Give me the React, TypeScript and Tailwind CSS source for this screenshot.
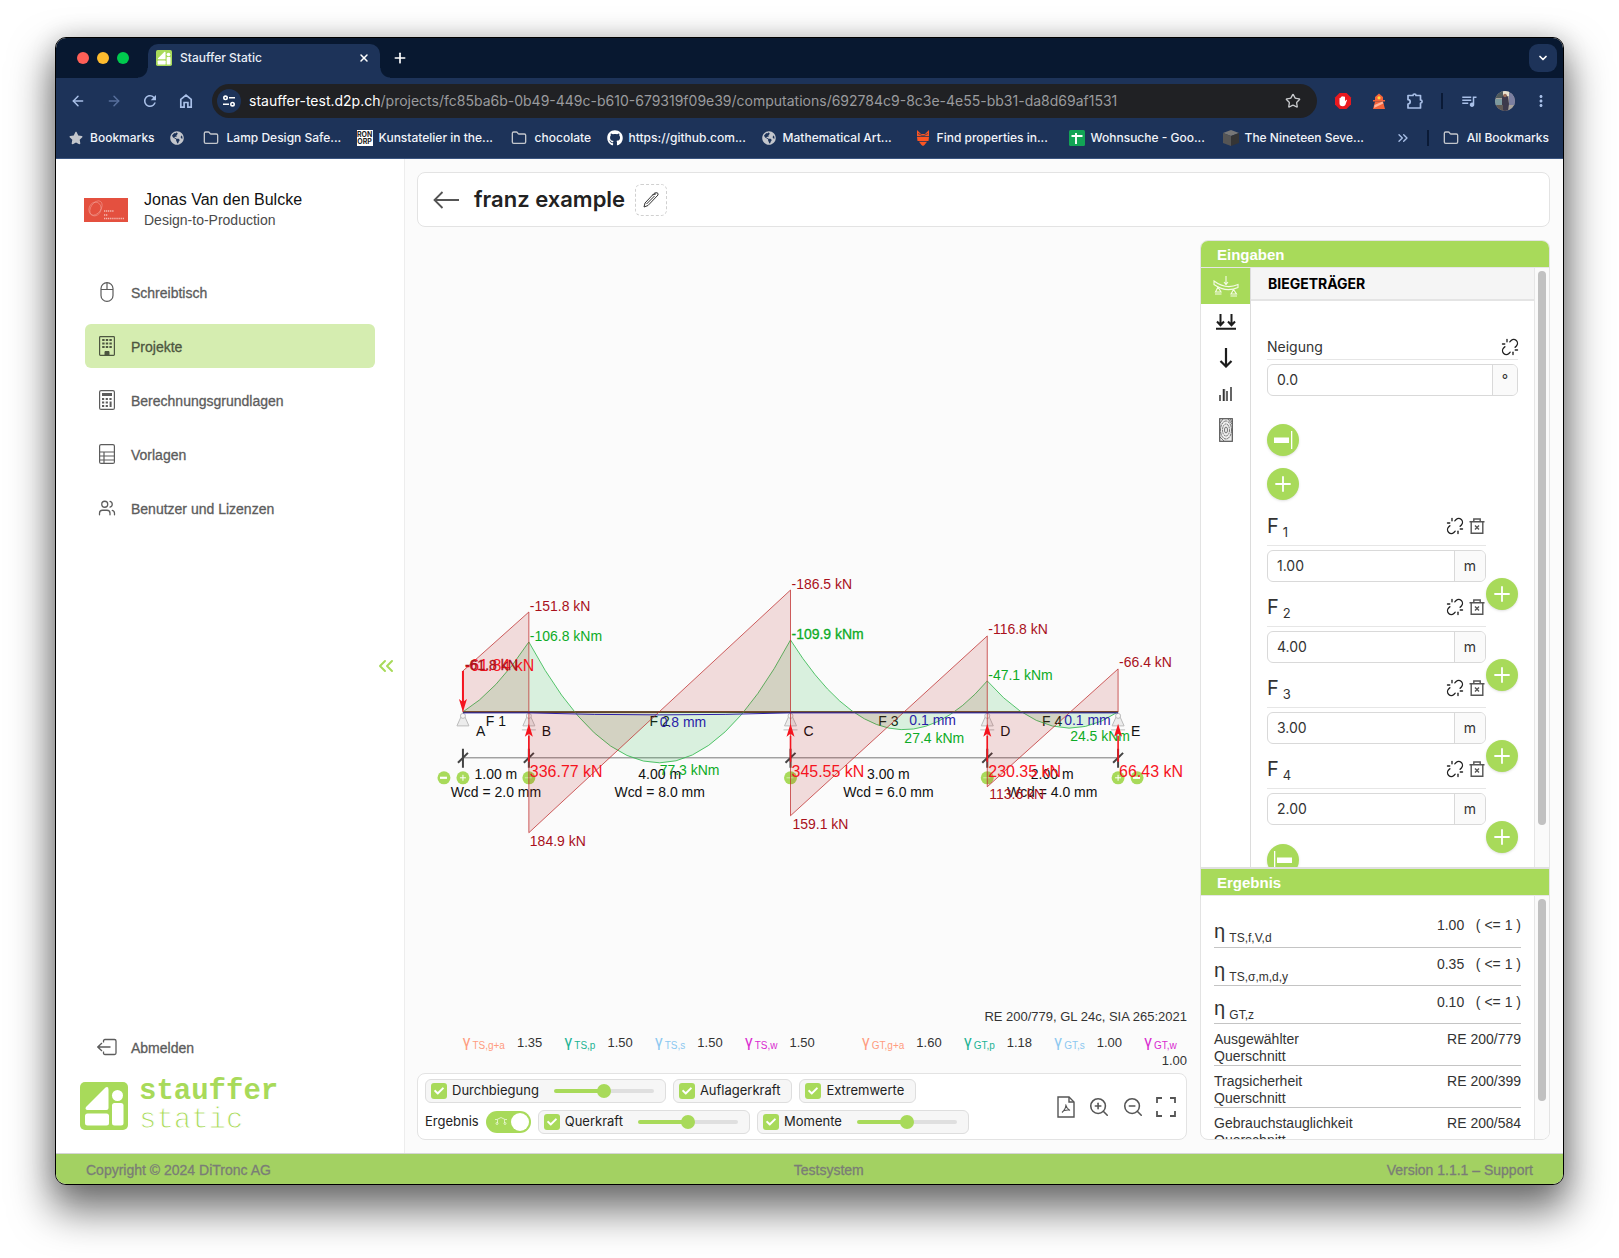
import React from "react";
import {
  ArrowLeft,
  ArrowRight,
  ChevronDown,
  ChevronsLeft,
  ChevronsRight,
  Folder,
  Plus,
  Star,
  Unlink,
  Users,
  X,
  ZoomIn,
  ZoomOut,
} from "lucide-react";
import { FaGithub, FaGlobeAmericas, FaStar, FaCheck } from "react-icons/fa";
import { MdMoreVert, MdQueueMusic, MdRefresh } from "react-icons/md";

function LogoMark({ className }: { className: string }) {
  return (
    <svg viewBox="0 0 48 48" className={className} aria-hidden="true">
      <rect width="48" height="48" rx="5" fill="#a8da5a" />
      <path d="M6 25 L25.500 5.500 Q28.500 4 28.500 7.500 V26 Q28.500 28 26.500 28 H7.500 Q4.500 27.500 6 25Z" fill="#fff" />
      <rect x="5" y="31.500" width="24" height="12" rx="2.500" fill="#fff" />
      <circle cx="37.500" cy="13.500" r="5.500" fill="#fff" />
      <rect x="32" y="21" width="11.500" height="22.500" rx="2.500" fill="#fff" />
    </svg>
  );
}

/* ---------- browser chrome ---------- */

function TabStrip() {
  return (
    <div className="flex h-10 items-end bg-[#081830] pr-1.5">
      <div className="flex h-10 w-23 items-center gap-2 pl-[21px]">
        <span className="size-3 rounded-full bg-[#ff5f57]" />
        <span className="size-3 rounded-full bg-[#febc2e]" />
        <span className="size-3 rounded-full bg-[#00ca4e]" />
      </div>
      <div className="relative flex h-[34px] w-[232px] items-center rounded-t-[10px] bg-[#1d3359] px-2 pb-1.5">
        <span className="absolute bottom-0 -left-2.5 size-2.5 bg-[radial-gradient(circle_at_0_0,transparent_9px,#1d3359_10px)]" />
        <span className="absolute -right-2.5 bottom-0 size-2.5 bg-[radial-gradient(circle_at_100%_0,transparent_9px,#1d3359_10px)]" />
        <LogoMark className="size-4" />
        <span className="ml-2 flex-1 text-xs font-medium text-[#e8edf6]">Stauffer Static</span>
        <button type="button" aria-label="Close tab" className="mr-0.5 text-white">
          <X className="size-3" strokeWidth={3} />
        </button>
      </div>
      <button type="button" aria-label="New tab" className="mb-3 ml-3 text-white">
        <Plus className="size-4" strokeWidth={2.500} />
      </button>
      <button type="button" aria-label="Search tabs" className="mb-1.5 ml-auto grid size-7 place-items-center rounded-[9px] bg-[#1d3359] text-white">
        <ChevronDown className="size-3" strokeWidth={3.500} />
      </button>
    </div>
  );
}

function HomeIcon() {
  return (
    <svg viewBox="0 0 16 16" className="size-4" fill="none" stroke="currentColor" strokeWidth="1.700" aria-hidden="true">
      <path d="M2.800 6.300 8 2.200 13.200 6.300 V14.200 H9.900 V9.500 H6.100 V14.200 H2.800Z" />
    </svg>
  );
}

function PuzzleIcon() {
  return (
    <svg viewBox="0 0 18 18" className="size-[18px]" fill="none" stroke="currentColor" strokeWidth="1.700" strokeLinejoin="round" aria-hidden="true">
      <path d="M2 3.500 H7 A1.500 1.500 0 0 1 10 3.500 H14.500 V8 A1.600 1.600 0 0 1 14.500 11.200 V16 H2 V12 A2.200 2.200 0 0 0 2 7.600Z" />
    </svg>
  );
}

function Toolbar() {
  return (
    <div className="flex h-10 items-end bg-[#1d3359] pl-[13px] text-[#a9c0e8]">
      <div className="flex h-[34px] items-center gap-[18px]">
        <button type="button" aria-label="Back"><ArrowLeft className="size-[18px] p-px" strokeWidth={2.200} /></button>
        <button type="button" aria-label="Forward" className="text-[#576f9c]"><ArrowRight className="size-[18px] p-px" strokeWidth={2.200} /></button>
        <button type="button" aria-label="Reload"><MdRefresh className="size-[18px]" /></button>
        <button type="button" aria-label="Home" className="px-px"><HomeIcon /></button>
      </div>
      <div className="ml-[17px] flex h-[34px] min-w-0 flex-1 items-center rounded-full bg-[#202124] pr-4 pl-[5px]">
        <button type="button" aria-label="Site information" className="grid size-6 shrink-0 place-items-center rounded-full bg-[#1d3359] text-white">
          <svg viewBox="0 0 14 14" className="size-3.5" fill="none" stroke="currentColor" strokeWidth="1.600" aria-hidden="true">
            <circle cx="3.500" cy="3.800" r="1.700" /><path d="M7 3.800H13M1 10.200H7" /><circle cx="10.500" cy="10.200" r="1.700" />
          </svg>
        </button>
        <div role="textbox" aria-label="Address" className="ml-2 min-w-0 flex-1 truncate text-sm text-[#9a9b9e]">
          <span className="text-white">stauffer-test.d2p.ch</span>/projects/fc85ba6b-0b49-449c-b610-679319f09e39/computations/692784c9-8c3e-4e55-bb31-da8d69af1531
        </div>
        <button type="button" aria-label="Bookmark this page" className="text-[#c7c9cc]"><Star className="size-4" /></button>
      </div>
      <div className="flex h-[34px] items-center gap-[18px] pr-[13px] pl-[17px]">
        <svg viewBox="0 0 18 18" className="size-[18px]" aria-hidden="true">
          <path d="M5.500 1h7L17 5.500v7L12.500 17h-7L1 12.500v-7Z" fill="#e8191f" />
          <path d="M5.500 9.500V6.200q.7-.8 1.300 0V5q.7-.9 1.400 0v-.6q.8-.9 1.400 0V5q.8-.8 1.400 0v4.200l1-1.200q1-.6 1 .3L11.300 13q-1 1.200-2.600 1.200-3.200 0-3.200-3Z" fill="#fff" />
        </svg>
        <svg viewBox="0 0 18 18" className="size-[18px]" aria-hidden="true">
          <path d="M5 5 9 1.500 13 5V8h2v1.500H3V8h2Z" fill="#f4633a" />
          <path d="M5 9.500h8l2 7.500H3Z" fill="#f4633a" />
          <path d="m4.500 13 8-3.500.8 2L4 16Z" fill="#ffb59c" />
          <circle cx="9" cy="5.800" r="1.600" fill="#ffd83b" />
        </svg>
        <button type="button" aria-label="Extensions"><PuzzleIcon /></button>
        <span className="-mx-px h-4 w-0.5 bg-[#0a1a36]" />
        <button type="button" aria-label="Media controls"><MdQueueMusic className="size-[18px]" /></button>
        <svg viewBox="0 0 20 20" className="-mx-px size-5 rounded-full" role="img" aria-label="Profile">
          <rect width="20" height="20" fill="#a8a39c" />
          <path d="M0 0h8v7H0Z" fill="#4f5a5c" /><path d="M8 0h6v5H8Z" fill="#e9e2cf" />
          <path d="M14 2h6v12h-6Z" fill="#7b7fa0" /><path d="M0 8h7v6H0Z" fill="#7d9a9f" />
          <path d="M7 6q3-5 6 0l1 7-1 7H7Z" fill="#3d3a4c" /><circle cx="10" cy="4.500" r="1.800" fill="#9c6f5a" />
          <path d="M0 14h8v6H0Z" fill="#625a55" />
        </svg>
        <button type="button" aria-label="More"><MdMoreVert className="size-[18px]" /></button>
      </div>
    </div>
  );
}

function FoxIcon() {
  return (
    <svg viewBox="0 0 16 16" className="size-4 shrink-0" fill="#fc5523" aria-hidden="true">
      <path d="M2 0 6 4h4l4-4v6H2Z" /><path d="M2 6.800h12L13.500 11H2.500Z" /><path d="M4 11.800h8L9.500 15 8 16 6.500 15Z" />
      <path d="M3 3.500 8 6 13 3.500" stroke="#1d3359" strokeWidth=".7" fill="none" />
    </svg>
  );
}

function SheetsIcon() {
  return (
    <svg viewBox="0 0 16 16" className="size-4 shrink-0" aria-hidden="true">
      <rect width="16" height="16" rx="1.500" fill="#12a455" />
      <path d="M2.500 6h11M7 3v11" stroke="#fff" strokeWidth="1.900" />
    </svg>
  );
}

function CubeIcon() {
  return (
    <svg viewBox="0 0 16 16" className="size-4 shrink-0" aria-hidden="true">
      <path d="M8 0 16 3 8 6 0 3Z" fill="#777" /><path d="M0 3 8 6V16L0 13Z" fill="#555" /><path d="M16 3 8 6V16L16 13Z" fill="#353535" />
    </svg>
  );
}

function RonOrpIcon() {
  return (
    <span className="grid size-4 shrink-0 content-center justify-center overflow-hidden bg-white text-center text-[7px] leading-[7px] font-bold text-[#222]">
      <span>RON</span>
      <span>ORP</span>
    </span>
  );
}

function Bookmark({ icon, label, wide }: { icon: React.ReactNode; label?: string; wide?: boolean }) {
  return (
    <a href="#" aria-label={label ?? "Website"} className={wide ? "flex w-[154px] shrink-0 items-center gap-1.5" : "flex shrink-0 items-center gap-1.5"}>
      {icon}
      {label ? <span>{label}</span> : null}
    </a>
  );
}

function BookmarksBar() {
  const globe = <FaGlobeAmericas className="size-4 shrink-0 p-px text-[#c3c6cc]" />;
  const folder = <Folder className="mr-0.5 size-4 shrink-0 text-[#c3c6cc]" strokeWidth={2} />;
  return (
    <nav aria-label="Bookmarks" className="flex h-[41px] items-center gap-4 border-b border-[#3b5580] bg-[#1d3359] pr-3.5 pl-3 text-xs font-medium text-[#f1f4fa]">
      <Bookmark icon={<FaStar className="size-4 p-px text-[#c3c6cc]" />} label="Bookmarks" />
      <div className="-ml-0.5 flex min-w-0 flex-1 items-center">
        <span className="w-[34px] shrink-0"><Bookmark icon={globe} /></span>
        <Bookmark wide icon={folder} label="Lamp Design Safe..." />
        <Bookmark wide icon={<RonOrpIcon />} label="Kunstatelier in the..." />
        <span className="w-24 shrink-0"><Bookmark icon={folder} label="chocolate" /></span>
        <Bookmark wide icon={<FaGithub className="size-4 shrink-0 text-white" />} label="https://github.com..." />
        <Bookmark wide icon={globe} label="Mathematical Art..." />
        <Bookmark wide icon={<FoxIcon />} label="Find properties in..." />
        <Bookmark wide icon={<SheetsIcon />} label="Wohnsuche - Goo..." />
        <Bookmark icon={<CubeIcon />} label="The Nineteen Seve..." />
      </div>
      <button type="button" aria-label="More bookmarks" className="text-[#a9c0e8]"><ChevronsRight className="size-4" /></button>
      <span className="-mr-0.5 h-4 w-0.5 bg-[#0a1a36]" />
      <Bookmark icon={folder} label="All Bookmarks" />
    </nav>
  );
}

/* ---------- sidebar ---------- */

const lineIcon = "size-5 shrink-0";

function MouseIcon() {
  return (
    <svg viewBox="0 0 20 20" className={lineIcon} fill="none" stroke="currentColor" strokeWidth="1.200" aria-hidden="true">
      <rect x="4" y=".6" width="12" height="18.800" rx="6" /><path d="M4 7.500H16M10 .6V7.500" />
    </svg>
  );
}
function BuildingIcon() {
  return (
    <svg viewBox="0 0 20 20" className={lineIcon} fill="none" stroke="currentColor" aria-hidden="true">
      <rect x="2.600" y=".6" width="14.800" height="18.800" rx=".8" strokeWidth="1.200" />
      <path d="M5.200 4H15M5.200 7.500H15M5.200 11H15" strokeWidth="2" strokeDasharray="2.400 1.200" />
      <path d="M8 19v-3.500h4V19Z" fill="currentColor" />
    </svg>
  );
}
function CalculatorIcon() {
  return (
    <svg viewBox="0 0 20 20" className={lineIcon} fill="none" stroke="currentColor" aria-hidden="true">
      <rect x="2.600" y=".6" width="14.800" height="18.800" rx="1.500" strokeWidth="1.200" />
      <path d="M5 4.500H15" strokeWidth="3" />
      <path d="M5 9H15M5 12.500H11.500M5 16H11.500" strokeWidth="2" strokeDasharray="2.200 1.500" />
      <path d="M13.600 11.500V17" strokeWidth="2" />
    </svg>
  );
}
function TableIcon() {
  return (
    <svg viewBox="0 0 20 20" className={lineIcon} fill="none" stroke="currentColor" strokeWidth="1.200" aria-hidden="true">
      <rect x="2.600" y=".6" width="14.800" height="18.800" rx="1.500" />
      <path d="M2.600 8H17.400M2.600 12H17.400M2.600 16H17.400M7 8V19.400" />
    </svg>
  );
}
function LogoutIcon() {
  return (
    <svg viewBox="0 0 20 20" className={lineIcon} fill="none" stroke="currentColor" strokeWidth="1.300" aria-hidden="true">
      <path d="M6.500 5.500V4Q6.500 2.500 8 2.500H17.500Q19 2.500 19 4V16Q19 17.500 17.500 17.500H8Q6.500 17.500 6.500 16V14.500" />
      <path d="M13.500 10H.8M5 6 .8 10 5 14" />
    </svg>
  );
}

function NavItem({ icon, label, active }: { icon: React.ReactNode; label: string; active?: boolean }) {
  return (
    <a
      href="#"
      aria-current={active ? "page" : undefined}
      className={
        active
          ? "flex h-11 items-center gap-3.5 rounded-md bg-[#d5edb0] px-3 text-sm text-[#4d5640] [-webkit-text-stroke:0.3px_currentColor]"
          : "flex h-11 items-center gap-3.5 rounded-md px-3 text-sm text-[#5c5c5c] [-webkit-text-stroke:0.3px_currentColor]"
      }
    >
      {icon}
      <span className="pt-0.5">{label}</span>
    </a>
  );
}

function Sidebar() {
  return (
    <aside className="flex w-[349px] shrink-0 flex-col border-r border-[#ededed] bg-white">
      <div className="flex items-center gap-4 pt-[31px] pl-7">
        <svg viewBox="0 0 44 24" className="h-6 w-11" role="img" aria-label="Design-to-Production">
          <rect width="44" height="24" fill="#e4503f" />
          <g fill="none" stroke="#f3a79e" strokeWidth=".5">
            <ellipse cx="12" cy="10" rx="5" ry="8" transform="rotate(35 12 10)" />
            <ellipse cx="11" cy="11" rx="6" ry="7" transform="rotate(20 11 11)" />
          </g>
          <path d="M20 13h10M20 17h4M20 20.500h20" stroke="#f3b9b2" strokeWidth="1.300" strokeDasharray="1.200 .7" />
        </svg>
        <div>
          <div className="text-base leading-5 text-[#111]">Jonas Van den Bulcke</div>
          <div className="text-sm leading-5 text-[#4a4a4a]">Design-to-Production</div>
        </div>
      </div>
      <nav aria-label="Hauptmenü" className="mt-10 flex flex-col gap-2.5 px-[29px]">
        <NavItem icon={<MouseIcon />} label="Schreibtisch" />
        <NavItem active icon={<BuildingIcon />} label="Projekte" />
        <NavItem icon={<CalculatorIcon />} label="Berechnungsgrundlagen" />
        <NavItem icon={<TableIcon />} label="Vorlagen" />
        <NavItem icon={<Users className="size-5 p-px" strokeWidth={1.700} />} label="Benutzer und Lizenzen" />
      </nav>
      <div className="mt-[124px] flex justify-end pr-1.5">
        <button type="button" aria-label="Menü einklappen" className="text-[#a8da5a]">
          <ChevronsLeft className="size-6" />
        </button>
      </div>
      <div className="mt-auto px-[29px]">
        <NavItem icon={<LogoutIcon />} label="Abmelden" />
      </div>
      <div className="flex items-center gap-[11px] pt-2 pb-[18px] pl-6 font-['Liberation_Mono',monospace] text-[29px] leading-[29px] text-[#a8da5a]">
        <LogoMark className="size-12 shrink-0" />
        <div>
          <div className="font-bold">stauffer</div>
          <div className="[-webkit-text-stroke:1px_white]">static</div>
        </div>
      </div>
    </aside>
  );
}

/* ---------- beam diagram ---------- */

const BASE = 472;
const A = 46;
const B = 112;
const C = 374;
const D = 571;
const E = 702;

function Support({ x, roller }: { x: number; roller?: boolean }) {
  return (
    <g stroke="#bbb" fill="#ececec" strokeWidth="1">
      <path d={`M${x - 6} ${BASE + 14}L${x - 2} ${BASE + 5}H${x + 2}L${x + 6} ${BASE + 14}Z`} />
      <circle cx={x} cy={BASE + 4} r="2.500" fill="#f6f6f6" />
      {roller ? <path d={`M${x - 7} ${BASE + 18}H${x + 7}`} /> : null}
    </g>
  );
}

function Reaction({ x }: { x: number }) {
  return (
    <g>
      <path d={`M${x} ${BASE + 24}V${BASE + 50}`} stroke="#f5141e" strokeWidth="1.600" />
      <path d={`M${x} ${BASE + 12}L${x + 4} ${BASE + 25}L${x} ${BASE + 22}L${x - 4} ${BASE + 25}Z`} fill="#f5141e" />
    </g>
  );
}

function Dot({ x, sign, faint }: { x: number; sign: "plus" | "minus"; faint?: boolean }) {
  return (
    <g>
      <circle cx={x} cy={BASE + 66} r="6.500" fill="#a8da5a" />
      <path
        d={sign === "plus" ? `M${x - 3} ${BASE + 66}h6m-3 -3v6` : `M${x - 4} ${BASE + 66}h7`}
        stroke="#fff"
        strokeWidth={sign === "plus" || faint ? 1 : 2.200}
        opacity={faint ? 0.5 : 1}
      />
    </g>
  );
}

function BeamDiagram() {
  const nodes = [A, B, C, D, E];
  const spans = [
    { x: 79, name: "F 1", len: "1.00 m", wcd: "Wcd = 2.0 mm" },
    { x: 243, name: "F 2", len: "4.00 m", wcd: "Wcd = 8.0 mm" },
    { x: 472, name: "F 3", len: "3.00 m", wcd: "Wcd = 6.0 mm" },
    { x: 636, name: "F 4", len: "2.00 m", wcd: "Wcd = 4.0 mm" },
  ];
  return (
    <svg viewBox="0 0 771 766" className="min-h-0 w-full flex-1 overflow-visible" fontSize="14" role="img" aria-label="Biegeträger">
      {nodes.map((x, i) => <Support key={x} x={x} roller={i > 0} />)}
      {nodes.map((x, i) => <Dot key={x} x={x} sign={i === 0 || i === 4 ? "plus" : "minus"} faint={i > 0 && i < 4} />)}
      <Dot x={27} sign="minus" />
      <Dot x={721} sign="minus" />
      <path d={`M${A} ${BASE + 46}H${E}`} stroke="#777" strokeWidth="1" />
      {nodes.map((x) => (
        <path key={x} d={`M${x} ${BASE + 37}v19M${x - 5} ${BASE + 51}l10 -10`} stroke="#444" strokeWidth="2" />
      ))}
      {spans.map((s) => (
        <g key={s.name} textAnchor="middle" fill="#111">
          <text x={s.x} y={BASE + 14}>{s.name}</text>
          <text x={s.x} y={BASE + 67}>{s.len}</text>
          <text x={s.x} y={BASE + 85}>{s.wcd}</text>
        </g>
      ))}
      {["A", "B", "C", "D", "E"].map((n, i) => (
        <text key={n} x={nodes[i] + 13} y={BASE + 24} fill="#111">{n}</text>
      ))}

      <path d={`M${A} ${BASE}H${E}`} stroke="#222" strokeWidth="2" />

      <g fill="#1eb43c" fillOpacity=".15" stroke="#35b950" strokeOpacity=".85" strokeWidth="1">
        <path d={`M${A} ${BASE}Q79 452 ${B} 402Q243 645 ${C} 400Q472.500 556 ${D} 441Q636.500 516 ${E} ${BASE}Z`} />
      </g>
      <g fill="#b20000" fillOpacity=".125" stroke="#bf2a2a" strokeOpacity=".75" strokeWidth="1">
        <path d={`M${A} ${BASE}V431L${B} 372V593L${C} 350V576L${D} 396V547L${E} 429V${BASE}Z`} />
      </g>
      <path d={`M${A} ${BASE + 1}H${B}Q243 ${BASE + 5} ${C} ${BASE + 1}H${E}`} fill="none" stroke="#2a1ea8" strokeWidth="1" />

      <g fill="#f5141e" fontSize="16">
        <text x={A + 2} y="431">-61.84 kN</text>
      </g>
      <g fill="#a9111b">
        <text x={B + 1} y="371">-151.8 kN</text>
        <text x={A + 2} y="430" stroke="#a9111b" strokeWidth=".3">-61.8 kN</text>
        <text x={B + 1} y="606">184.9 kN</text>
        <text x={C + 1} y="349">-186.5 kN</text>
        <text x={C + 2} y="589">159.1 kN</text>
        <text x={D + 1} y="394">-116.8 kN</text>
        <text x={D + 2} y="559">113.6 kN</text>
        <text x={E + 1} y="427">-66.4 kN</text>
      </g>
      <g fill="#0dab26">
        <text x={B + 1} y="401">-106.8 kNm</text>
        <text x={C + 1} y="399" stroke="#0dab26" strokeWidth=".3">-109.9 kNm</text>
        <text x={D + 1} y="440">-47.1 kNm</text>
        <text x={243} y="535">77.3 kNm</text>
        <text x={488} y="503">27.4 kNm</text>
        <text x={654} y="501">24.5 kNm</text>
      </g>
      <g fill="#2a1ea8">
        <text x={243} y="487">0.8 mm</text>
        <text x={493} y="485">0.1 mm</text>
        <text x={648} y="485">0.1 mm</text>
      </g>
      <path d={`M${A} 431V${BASE - 8}`} stroke="#f5141e" strokeWidth="2" />
      <path d={`M${A} ${BASE}L${A + 4} ${BASE - 13}L${A} ${BASE - 10}L${A - 4} ${BASE - 13}Z`} fill="#f5141e" />
      {nodes.slice(1).map((x) => <Reaction key={x} x={x} />)}
      <g fill="#f5141e" fontSize="16">
        <text x={B + 1} y="537">336.77 kN</text>
        <text x={C + 1} y="537">345.55 kN</text>
        <text x={D + 1} y="537">230.35 kN</text>
        <text x={E + 1} y="537">66.43 kN</text>
      </g>
    </svg>
  );
}

/* ---------- factors and display controls ---------- */

function Factor({ sub, value, color, wrap }: { sub: string; value: string; color: string; wrap?: boolean }) {
  return (
    <span className={wrap ? "flex w-[43px] flex-col" : "flex gap-3"}>
      <span className={color}>
        <span className="font-['Roboto',sans-serif] text-base leading-[16px]">γ</span>
        <span className="relative top-0.5 ml-0.5 text-[10px]">{sub}</span>
      </span>
      <span className="text-right">{value}</span>
    </span>
  );
}

function Factors() {
  return (
    <div className="mt-[7px] flex h-9 items-start justify-end gap-[47px] text-[13px] leading-[17px] text-[#333]">
      <div className="flex gap-[22px]">
        <Factor sub="TS,g+a" value="1.35" color="text-[#ff9c80]" />
        <Factor sub="TS,p" value="1.50" color="text-[#1bb394]" />
        <Factor sub="TS,s" value="1.50" color="text-[#8cc8f0]" />
        <Factor sub="TS,w" value="1.50" color="text-[#d92bd0]" />
      </div>
      <div className="flex gap-[22px]">
        <Factor sub="GT,g+a" value="1.60" color="text-[#ff9c80]" />
        <Factor sub="GT,p" value="1.18" color="text-[#1bb394]" />
        <Factor sub="GT,s" value="1.00" color="text-[#8cc8f0]" />
        <Factor wrap sub="GT,w" value="1.00" color="text-[#d92bd0]" />
      </div>
    </div>
  );
}

function Chip({ label, slider }: { label: string; slider?: boolean }) {
  return (
    <div className="flex h-6 items-center rounded-md border border-[#dedede] bg-[#f6f6f6] pr-[11px] pl-[5px]">
      <label className="flex items-center gap-[5px]">
        <span className="grid size-4 place-items-center">
          <input type="checkbox" defaultChecked className="col-start-1 row-start-1 size-4 appearance-none rounded-[3px] bg-[#a8da5a]" />
          <FaCheck className="pointer-events-none col-start-1 row-start-1 size-2.5 text-white" />
        </span>
        {label}
      </label>
      {slider ? (
        <input
          type="range"
          aria-label={label}
          defaultValue={50}
          className="ml-[15px] h-1 w-[100px] appearance-none rounded-full bg-[linear-gradient(90deg,#a8da5a_50%,#dfdfdf_50%)] [&::-webkit-slider-thumb]:size-3.5 [&::-webkit-slider-thumb]:appearance-none [&::-webkit-slider-thumb]:rounded-full [&::-webkit-slider-thumb]:bg-[#a8da5a]"
        />
      ) : null}
    </div>
  );
}

function PdfIcon() {
  return (
    <svg viewBox="0 0 18 22" className="h-[22px] w-[18px]" fill="none" stroke="currentColor" strokeWidth="1.400" aria-hidden="true">
      <path d="M1 1H12L17 6V21H1Z" /><path d="M12 1V6H17" />
      <path d="M8.500 8.500Q9.500 12.500 13 14.500M8.800 8.500Q9 13 5 16.500M6.500 14.800 12 13.800" strokeWidth="1.100" />
    </svg>
  );
}
function FullscreenIcon() {
  return (
    <svg viewBox="0 0 20 20" className="size-5" fill="none" stroke="currentColor" strokeWidth="1.800" aria-hidden="true">
      <path d="M1 6V1H6M14 1H19V6M19 14V19H14M6 19H1V14" />
    </svg>
  );
}

function DisplayControls() {
  return (
    <div className="mt-[3px] flex items-center justify-between rounded-lg border border-[#e3e3e3] bg-white py-[5px] pr-2.5 pl-[7px] font-['Inter',sans-serif] text-[13px] text-[#222]">
      <div className="flex flex-col gap-[7px]">
        <div className="flex gap-[7px]">
          <Chip label="Durchbiegung" slider />
          <Chip label="Auflagerkraft" />
          <Chip label="Extremwerte" />
        </div>
        <div className="flex items-center gap-[7px]">
          <label htmlFor="ergebnis-toggle">Ergebnis</label>
          <span className="relative h-[22px] w-[45px]">
            <input
              id="ergebnis-toggle"
              type="checkbox"
              role="switch"
              defaultChecked
              className="block h-[22px] w-[45px] appearance-none rounded-full bg-[#a8da5a] before:absolute before:top-0.5 before:right-0.5 before:size-[18px] before:rounded-full before:bg-white"
            />
            <svg viewBox="0 0 12 8" className="pointer-events-none absolute top-1.5 left-[9px] h-2 w-3" fill="none" stroke="#eef8dc" strokeWidth=".8" aria-hidden="true">
              <path d="M0 2.500H2L6 .5 10 2.500H12M2.500 2.500V6M9.500 2.500V6" /><circle cx="2" cy="6.500" r="1" /><circle cx="10" cy="6.500" r="1" />
            </svg>
          </span>
          <Chip label="Querkraft" slider />
          <Chip label="Momente" slider />
        </div>
      </div>
      <div className="flex items-center gap-3 text-[#555]">
        <button type="button" aria-label="PDF" className="mr-px"><PdfIcon /></button>
        <button type="button" aria-label="Vergrössern"><ZoomIn className="size-[22px]" strokeWidth={1.700} /></button>
        <button type="button" aria-label="Verkleinern"><ZoomOut className="size-[22px]" strokeWidth={1.700} /></button>
        <button type="button" aria-label="Vollbild"><FullscreenIcon /></button>
      </div>
    </div>
  );
}

/* ---------- input and result panel ---------- */

const roundButton = "grid size-8 shrink-0 place-items-center rounded-full bg-[#a8da5a] text-white shadow-sm";

function TrashIcon() {
  return (
    <svg viewBox="0 0 16 16" className="size-4" fill="none" stroke="#555" strokeWidth="1.400" aria-hidden="true">
      <path d="M.5 3.800H15.500M2.200 4V15.300H13.800V4M4.800 3.500V1H11.200V3.500" /><path d="M6 7.500 10 11.500M10 7.500 6 11.500" />
    </svg>
  );
}

function NumberField({ id, value, unit }: { id: string; value: string; unit: string }) {
  return (
    <div className="mt-1 flex h-8 overflow-hidden rounded-md border border-[#d9d9d9] bg-white text-sm text-[#333]">
      <input id={id} defaultValue={value} className="min-w-0 flex-1 px-[9px] outline-none" />
      <span className={unit === "m" ? "grid w-[31px] place-items-center border-l border-[#d9d9d9] bg-[#fafafa]" : "grid w-[25px] place-items-center border-l border-[#d9d9d9] bg-[#fafafa]"}>{unit}</span>
    </div>
  );
}

function SpanField({ index, value }: { index: number; value: string }) {
  return (
    <div className="flex items-end">
      <div className="min-w-0 flex-1">
        <div className="flex h-10 items-center justify-between border-b border-[#e6e6e6]">
          <label htmlFor={`span-${index}`} className="text-xl text-[#333]">
            F<span className="relative top-1 ml-1 text-[13px]">{index}</span>
          </label>
          <span className="flex items-center gap-[5px] pr-px text-[#222]">
            <button type="button" aria-label="Verknüpfung lösen"><Unlink className="size-[18px]" strokeWidth={1.800} /></button>
            <button type="button" aria-label="Feld löschen"><TrashIcon /></button>
          </span>
        </div>
        <NumberField id={`span-${index}`} value={value} unit="m" />
      </div>
      <button type="button" aria-label="Feld hinzufügen" className="z-10 -mb-7 grid size-8 shrink-0 place-items-center rounded-full bg-[#a8da5a] text-white shadow-sm">
        <Plus className="size-6" strokeWidth={1.800} />
      </button>
    </div>
  );
}

function Scrollbar({ thumb }: { thumb: string }) {
  return (
    <div className="w-[15px] shrink-0 border-l border-[#e6e6e6] bg-[#fafafa] px-[3px] pt-[3px]" aria-hidden="true">
      <div className={thumb} />
    </div>
  );
}

function BeamTabIcon() {
  return (
    <svg viewBox="0 0 26 22" className="h-[22px] w-[26px]" fill="none" stroke="#f4fbe6" strokeWidth="1.100" aria-hidden="true">
      <path d="M1 6Q13 15 25 9.500V12.500Q13 18 1 9.500Z" />
      <path d="M13 1V9M11 7 13 9.500 15 7" />
      <path d="M5 12 2.500 17H8L5 12M2 19H8.500M20.500 14.500 18 19H23.500L20.500 14.500M17.500 21H24" />
    </svg>
  );
}

function InputTabs() {
  const tab = "grid h-9 w-full place-items-center";
  return (
    <div className="flex w-[50px] shrink-0 flex-col border-r border-[#dcdcdc] bg-white text-[#1c1c1c]">
      <button type="button" aria-label="Biegeträger" className="grid h-9 w-full place-items-center bg-[#a8da5a]"><BeamTabIcon /></button>
      <button type="button" aria-label="Flächenlast" className={tab}>
        <svg viewBox="0 0 20 16" className="h-4 w-5" fill="none" stroke="currentColor" strokeWidth="2" aria-hidden="true">
          <path d="M4.500 0V11M1 7.500 4.500 11.200 8 7.500M15.500 0V11M12 7.500 15.500 11.200 19 7.500M0 14.800H20" />
        </svg>
      </button>
      <button type="button" aria-label="Einzellast" className={tab}>
        <svg viewBox="0 0 14 20" className="h-5 w-3.5" fill="none" stroke="currentColor" strokeWidth="2.200" aria-hidden="true">
          <path d="M7 0V18M1.500 13 7 18.500 12.500 13" />
        </svg>
      </button>
      <button type="button" aria-label="Lastfälle" className={tab}>
        <svg viewBox="0 0 13 14" className="h-3.5 w-[13px]" fill="none" stroke="#333" strokeWidth="1.500" aria-hidden="true">
          <path d="M1 14V8M4.500 14V2M8 14V4M12 14V0" /><path d="M5.700 14V2" strokeWidth=".8" />
        </svg>
      </button>
      <button type="button" aria-label="Material" className={tab}>
        <svg viewBox="0 0 14 24" className="h-6 w-3.5" fill="none" stroke="#555" strokeWidth=".8" aria-hidden="true">
          <rect x=".7" y=".7" width="12.600" height="22.600" strokeWidth="1.200" fill="#eee" />
          <ellipse cx="7" cy="12" rx="1.500" ry="3" /><ellipse cx="7" cy="12" rx="3.500" ry="6" strokeDasharray="2 .6" />
          <ellipse cx="7" cy="12" rx="5.500" ry="9" strokeDasharray="3 .6" /><path d="M9 1 13 6M11 1 13 4M1 19 5 23M1 5 4 1" />
        </svg>
      </button>
    </div>
  );
}

function InputSection() {
  return (
    <section className="flex min-h-0 flex-1 flex-col">
      <h2 className="h-[26px] shrink-0 bg-[#a8da5a] pl-4 font-['Liberation_Sans',sans-serif] text-[15px] leading-[27px] font-bold text-white">Eingaben</h2>
      <div className="flex min-h-0 flex-1 border-t border-[#e6e6e6]">
        <InputTabs />
        <div className="min-w-0 flex-1 overflow-hidden">
          <h3 className="h-[33px] border-b-2 border-[#e4e4e4] bg-[#f5f5f5] pl-[17px] text-sm leading-8 font-bold text-black">BIEGETRÄGER</h3>
          <div className="px-4 pt-[33px]">
            <div className="flex h-[26px] items-center justify-between border-b border-[#e6e6e6] text-sm text-[#333]">
              <label htmlFor="slope">Neigung</label>
              <button type="button" aria-label="Verknüpfung lösen" className="-mr-px text-[#222]"><Unlink className="size-[18px]" strokeWidth={1.800} /></button>
            </div>
            <NumberField id="slope" value="0.0" unit="°" />
            <button type="button" aria-label="Auskragung links" className={`mt-7 ${roundButton}`}>
              <svg viewBox="0 0 20 18" className="h-[18px] w-5" fill="#fff" aria-hidden="true"><path d="M1 6.500H16V12H1ZM18 0h1.300v18H18Z" /></svg>
            </button>
            <button type="button" aria-label="Feld hinzufügen" className={`mt-3 ${roundButton}`}>
              <Plus className="size-6" strokeWidth={1.800} />
            </button>
            <div className="mt-1.5 flex flex-col gap-[5px]">
              <SpanField index={1} value="1.00" />
              <SpanField index={2} value="4.00" />
              <SpanField index={3} value="3.00" />
              <SpanField index={4} value="2.00" />
            </div>
            <button type="button" aria-label="Auskragung rechts" className={`mt-[19px] ${roundButton}`}>
              <svg viewBox="0 0 20 18" className="h-[18px] w-5" fill="#fff" aria-hidden="true"><path d="M4 6.500H19V12H4ZM1 0h1.300v18H1Z" /></svg>
            </button>
          </div>
        </div>
        <Scrollbar thumb="h-[93%] w-2 rounded-full bg-[#c1c1c1]" />
      </div>
    </section>
  );
}

const results = [
  { sub: "TS,f,V,d", value: "1.00" },
  { sub: "TS,σ,m,d,y", value: "0.35" },
  { sub: "GT,z", value: "0.10" },
];
const sections = [
  { kind: "Ausgewählter", value: "RE 200/779" },
  { kind: "Tragsicherheit", value: "RE 200/399" },
  { kind: "Gebrauchstauglichkeit", value: "RE 200/584" },
];

function ResultSection() {
  return (
    <section className="flex h-[272px] shrink-0 flex-col border-t-2 border-[#e0e0e0] font-['Liberation_Sans',sans-serif]">
      <h2 className="h-[26px] shrink-0 bg-[#a8da5a] pl-4 text-[15px] leading-[27px] font-bold text-white">Ergebnis</h2>
      <div className="flex min-h-0 flex-1 border-t border-[#e6e6e6]">
        <div className="min-w-0 flex-1 overflow-hidden pt-[13px] pr-[13px] pl-[13px]">
          <table className="w-full text-sm leading-[17px] text-[#333]">
            <tbody>
              {results.map((r) => (
                <tr key={r.sub} className="h-[38px] border-b border-[#c4c4c4]">
                  <th scope="row" className="pt-2.5 text-left align-top font-normal">
                    <span className="font-['Roboto',sans-serif] text-xl leading-6">η</span>
                    <span className="relative top-1 ml-1 text-xs">{r.sub}</span>
                  </th>
                  <td className="pt-2 text-right align-top whitespace-pre">{r.value}{"   ( <= 1 )"}</td>
                </tr>
              ))}
              {sections.map((s) => (
                <tr key={s.kind} className="h-[42px] border-b border-[#c4c4c4]">
                  <th scope="row" className="pt-[7px] text-left align-top font-normal">{s.kind}<br />Querschnitt</th>
                  <td className="pt-[7px] text-right align-top">{s.value}</td>
                </tr>
              ))}
            </tbody>
          </table>
        </div>
        <Scrollbar thumb="h-[84%] w-2 rounded-full bg-[#c1c1c1]" />
      </div>
    </section>
  );
}

function PageHeader() {
  return (
    <header className="flex h-[55px] shrink-0 items-center rounded-lg border border-[#e3e3e3] bg-white pl-[15px] font-['Inter',sans-serif]">
      <button type="button" aria-label="Zurück">
        <svg viewBox="0 0 27 18" className="h-[18px] w-[27px]" fill="none" stroke="#555" strokeWidth="1.800" aria-hidden="true">
          <path d="M26 9H1.500M9.500 1 1.500 9 9.500 17" />
        </svg>
      </button>
      <h1 className="ml-3.5 text-[22px] font-semibold text-[#222]">franz example</h1>
      <button type="button" aria-label="Bearbeiten" className="ml-2.5 grid size-8 place-items-center rounded-md border border-dashed border-[#d0d0d0]">
        <svg viewBox="0 0 16 16" className="size-4" fill="none" stroke="#333" strokeWidth="1" strokeLinejoin="round" aria-hidden="true">
          <path d="M1 15 2 11 11 1.500Q12 .5 14 .8Q15.500 1 15 3L5 13.500Z" /><path d="M9.500 3 13 1.800M3.500 12 11.500 4" />
        </svg>
      </button>
    </header>
  );
}

export default function App() {
  return (
    <div className="flex h-screen bg-white px-[55px] pt-[37px] pb-[73px] font-['Inter',sans-serif]">
      <div className="flex min-w-0 flex-1 flex-col overflow-hidden rounded-[11px] border border-black bg-[#fbfbfb] shadow-[0_22px_40px_4px_rgba(0,0,0,0.55),0_0_24px_rgba(0,0,0,0.15)]">
        <TabStrip />
        <Toolbar />
        <BookmarksBar />
        <div className="flex min-h-0 flex-1 font-['Liberation_Sans',sans-serif]">
          <Sidebar />
          <main className="flex min-w-0 flex-1 flex-col gap-[13px] py-[13px] pr-[13px] pl-3">
            <PageHeader />
            <div className="flex min-h-0 flex-1 gap-[13px]">
              <div className="flex min-w-0 flex-1 flex-col">
                <BeamDiagram />
                <div className="mt-px text-right text-[13px] leading-5 text-[#333]">RE 200/779, GL 24c, SIA 265:2021</div>
                <Factors />
                <DisplayControls />
              </div>
              <div className="flex w-[350px] shrink-0 flex-col overflow-hidden rounded-lg border border-[#e3e3e3] bg-white font-['Inter',sans-serif]">
                <InputSection />
                <ResultSection />
              </div>
            </div>
          </main>
        </div>
        <footer className="flex h-[31px] shrink-0 items-center justify-between border-t border-[#d5d5d5] bg-[#a3d162] px-[30px] pt-0.5 font-['Liberation_Sans',sans-serif] text-sm text-[#7a7d76] [-webkit-text-stroke:0.3px_currentColor]">
          <span>Copyright © 2024 DiTronc AG</span>
          <span>Testsystem</span>
          <span>Version 1.1.1 – <a href="#">Support</a></span>
        </footer>
      </div>
    </div>
  );
}
